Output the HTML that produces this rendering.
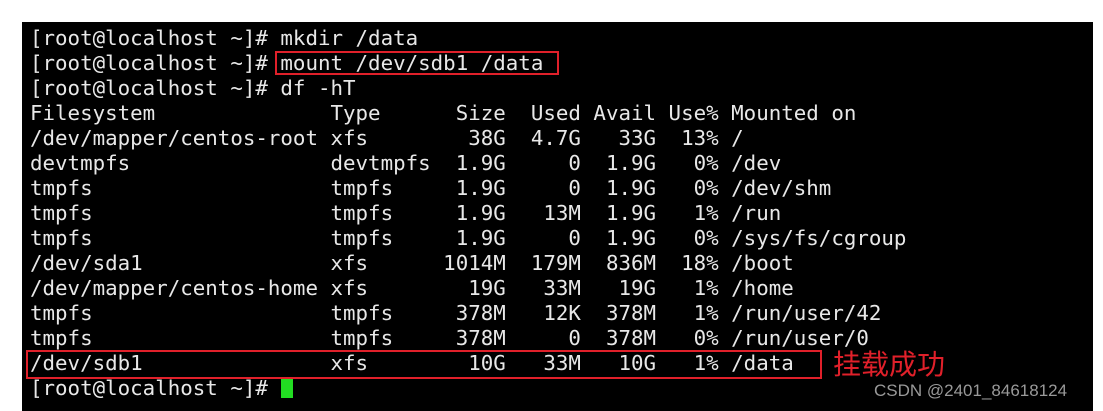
<!DOCTYPE html>
<html><head><style>
body{margin:0;width:1103px;height:411px;background:#fff;position:relative;overflow:hidden}
#t{position:absolute;left:22px;top:22px;width:1071px;height:389px;background:#000}
pre{position:absolute;left:30px;top:26px;margin:0;color:#e8e8e8;font-family:"DejaVu Sans Mono","Liberation Mono",monospace;font-size:20.8px;line-height:25px}
.r{position:absolute;border:2px solid #e0202a}
</style></head><body>
<div id="t"></div>
<pre>[root@localhost ~]# mkdir /data
[root@localhost ~]# mount /dev/sdb1 /data
[root@localhost ~]# df -hT
Filesystem              Type      Size  Used Avail Use% Mounted on
/dev/mapper/centos-root xfs        38G  4.7G   33G  13% /
devtmpfs                devtmpfs  1.9G     0  1.9G   0% /dev
tmpfs                   tmpfs     1.9G     0  1.9G   0% /dev/shm
tmpfs                   tmpfs     1.9G   13M  1.9G   1% /run
tmpfs                   tmpfs     1.9G     0  1.9G   0% /sys/fs/cgroup
/dev/sda1               xfs      1014M  179M  836M  18% /boot
/dev/mapper/centos-home xfs        19G   33M   19G   1% /home
tmpfs                   tmpfs     378M   12K  378M   1% /run/user/42
tmpfs                   tmpfs     378M     0  378M   0% /run/user/0
/dev/sdb1               xfs        10G   33M   10G   1% /data
[root@localhost ~]# </pre>
<div style="position:absolute;left:281px;top:378px;width:12px;height:20px;background:#22dd22"></div>
<div class="r" style="left:275px;top:51px;width:280px;height:20px"></div>
<div class="r" style="left:26px;top:350px;width:792px;height:25px"></div>
<div style="position:absolute;left:833px;top:346px;color:#e0202a;font-family:'Noto Sans CJK SC',sans-serif;font-size:28px;line-height:34px">挂载成功</div>
<div style="position:absolute;left:874px;top:381px;color:#999;font-family:'Liberation Sans',sans-serif;font-size:17px">CSDN @2401_84618124</div>
</body></html>
